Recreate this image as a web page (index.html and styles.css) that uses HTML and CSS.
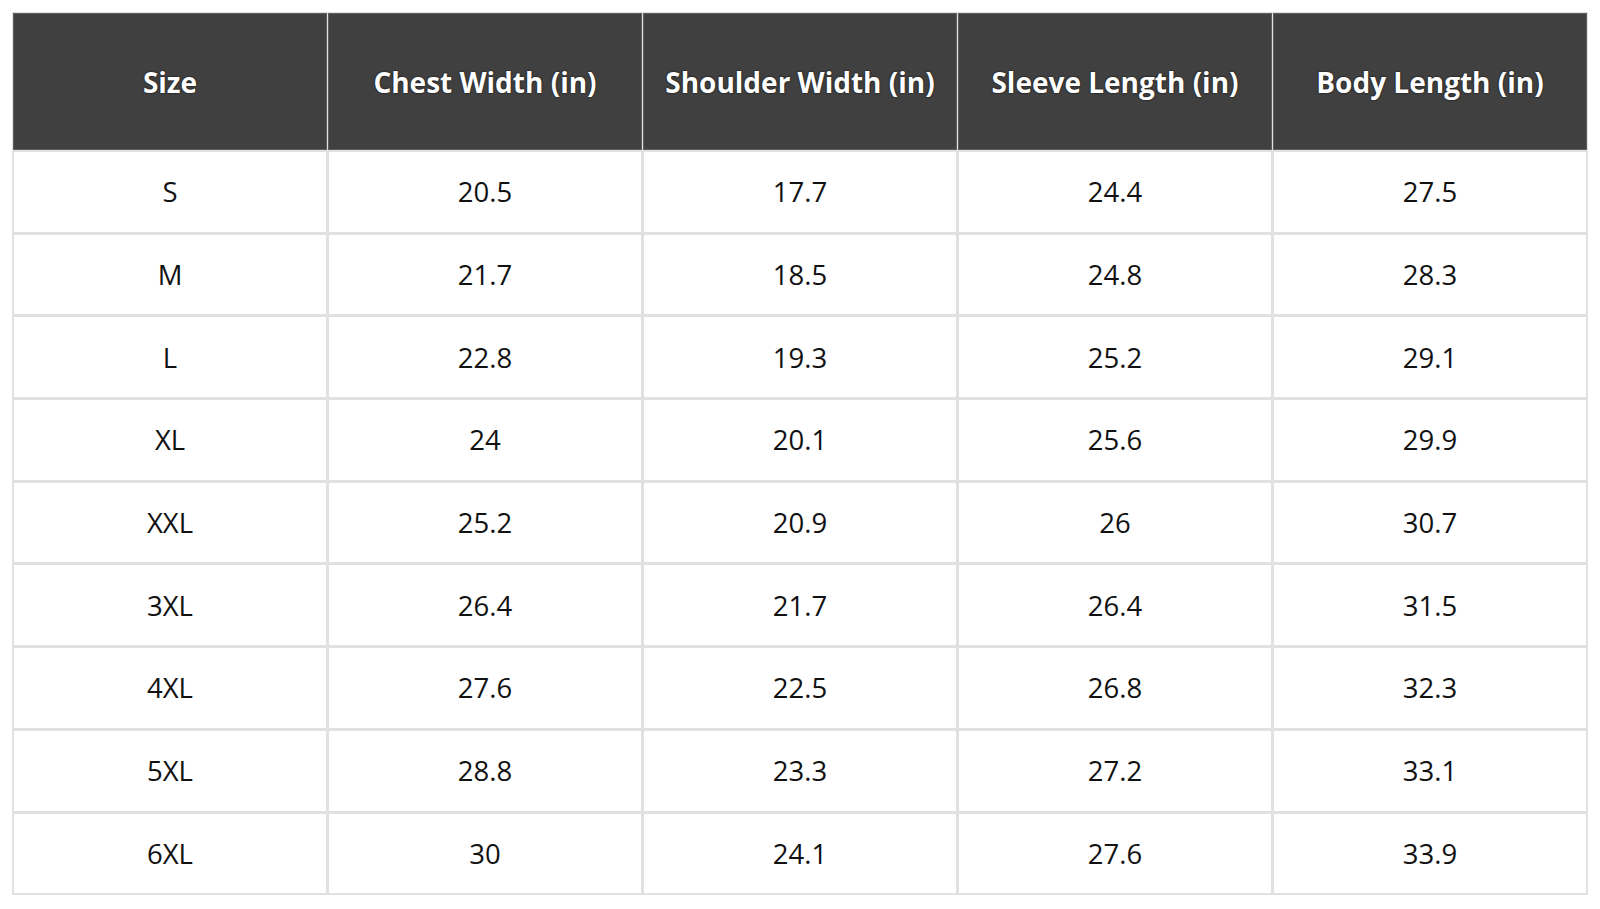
FILE: index.html
```html
<!DOCTYPE html>
<html>
<head>
<meta charset="utf-8">
<link rel="stylesheet" href="styles.css">
</head>
<body>
<div class="page">
<table class="size-table">
<thead>
<tr><th>Size</th><th>Chest Width (in)</th><th>Shoulder Width (in)</th><th>Sleeve Length (in)</th><th>Body Length (in)</th></tr>
</thead>
<tbody>
<tr><td>S</td><td>20.5</td><td>17.7</td><td>24.4</td><td>27.5</td></tr>
<tr><td>M</td><td>21.7</td><td>18.5</td><td>24.8</td><td>28.3</td></tr>
<tr><td>L</td><td>22.8</td><td>19.3</td><td>25.2</td><td>29.1</td></tr>
<tr><td>XL</td><td>24</td><td>20.1</td><td>25.6</td><td>29.9</td></tr>
<tr><td>XXL</td><td>25.2</td><td>20.9</td><td>26</td><td>30.7</td></tr>
<tr><td>3XL</td><td>26.4</td><td>21.7</td><td>26.4</td><td>31.5</td></tr>
<tr><td>4XL</td><td>27.6</td><td>22.5</td><td>26.8</td><td>32.3</td></tr>
<tr><td>5XL</td><td>28.8</td><td>23.3</td><td>27.2</td><td>33.1</td></tr>
<tr><td>6XL</td><td>30</td><td>24.1</td><td>27.6</td><td>33.9</td></tr>
</tbody>
</table>
</div>
</body>
</html>
```
FILE: styles.css
```css
html, body {
  margin: 0;
  padding: 0;
  background: #ffffff;
}
.page {
  padding: 12px;
}
.size-table {
  width: 1576px;
  table-layout: fixed;
  border-collapse: separate;
  border-spacing: 1px;
  background: #e1e1e1;
  font-family: "Open Sans", "Noto Sans", sans-serif;
}
.size-table th,
.size-table td {
  padding: 0;
  text-align: center;
  vertical-align: middle;
}
.size-table th {
  height: 135px;
  background: #404040;
  color: #ffffff;
  font-weight: 700;
  font-size: 28px;
  border: 1px solid #5e5e5e;
  text-shadow: 0 0 2px #000;
}
.size-table td {
  height: 79.7px;
  background: #ffffff;
  color: #111111;
  font-size: 27.5px;
  border: 1px solid #e1e1e1;
}
```
